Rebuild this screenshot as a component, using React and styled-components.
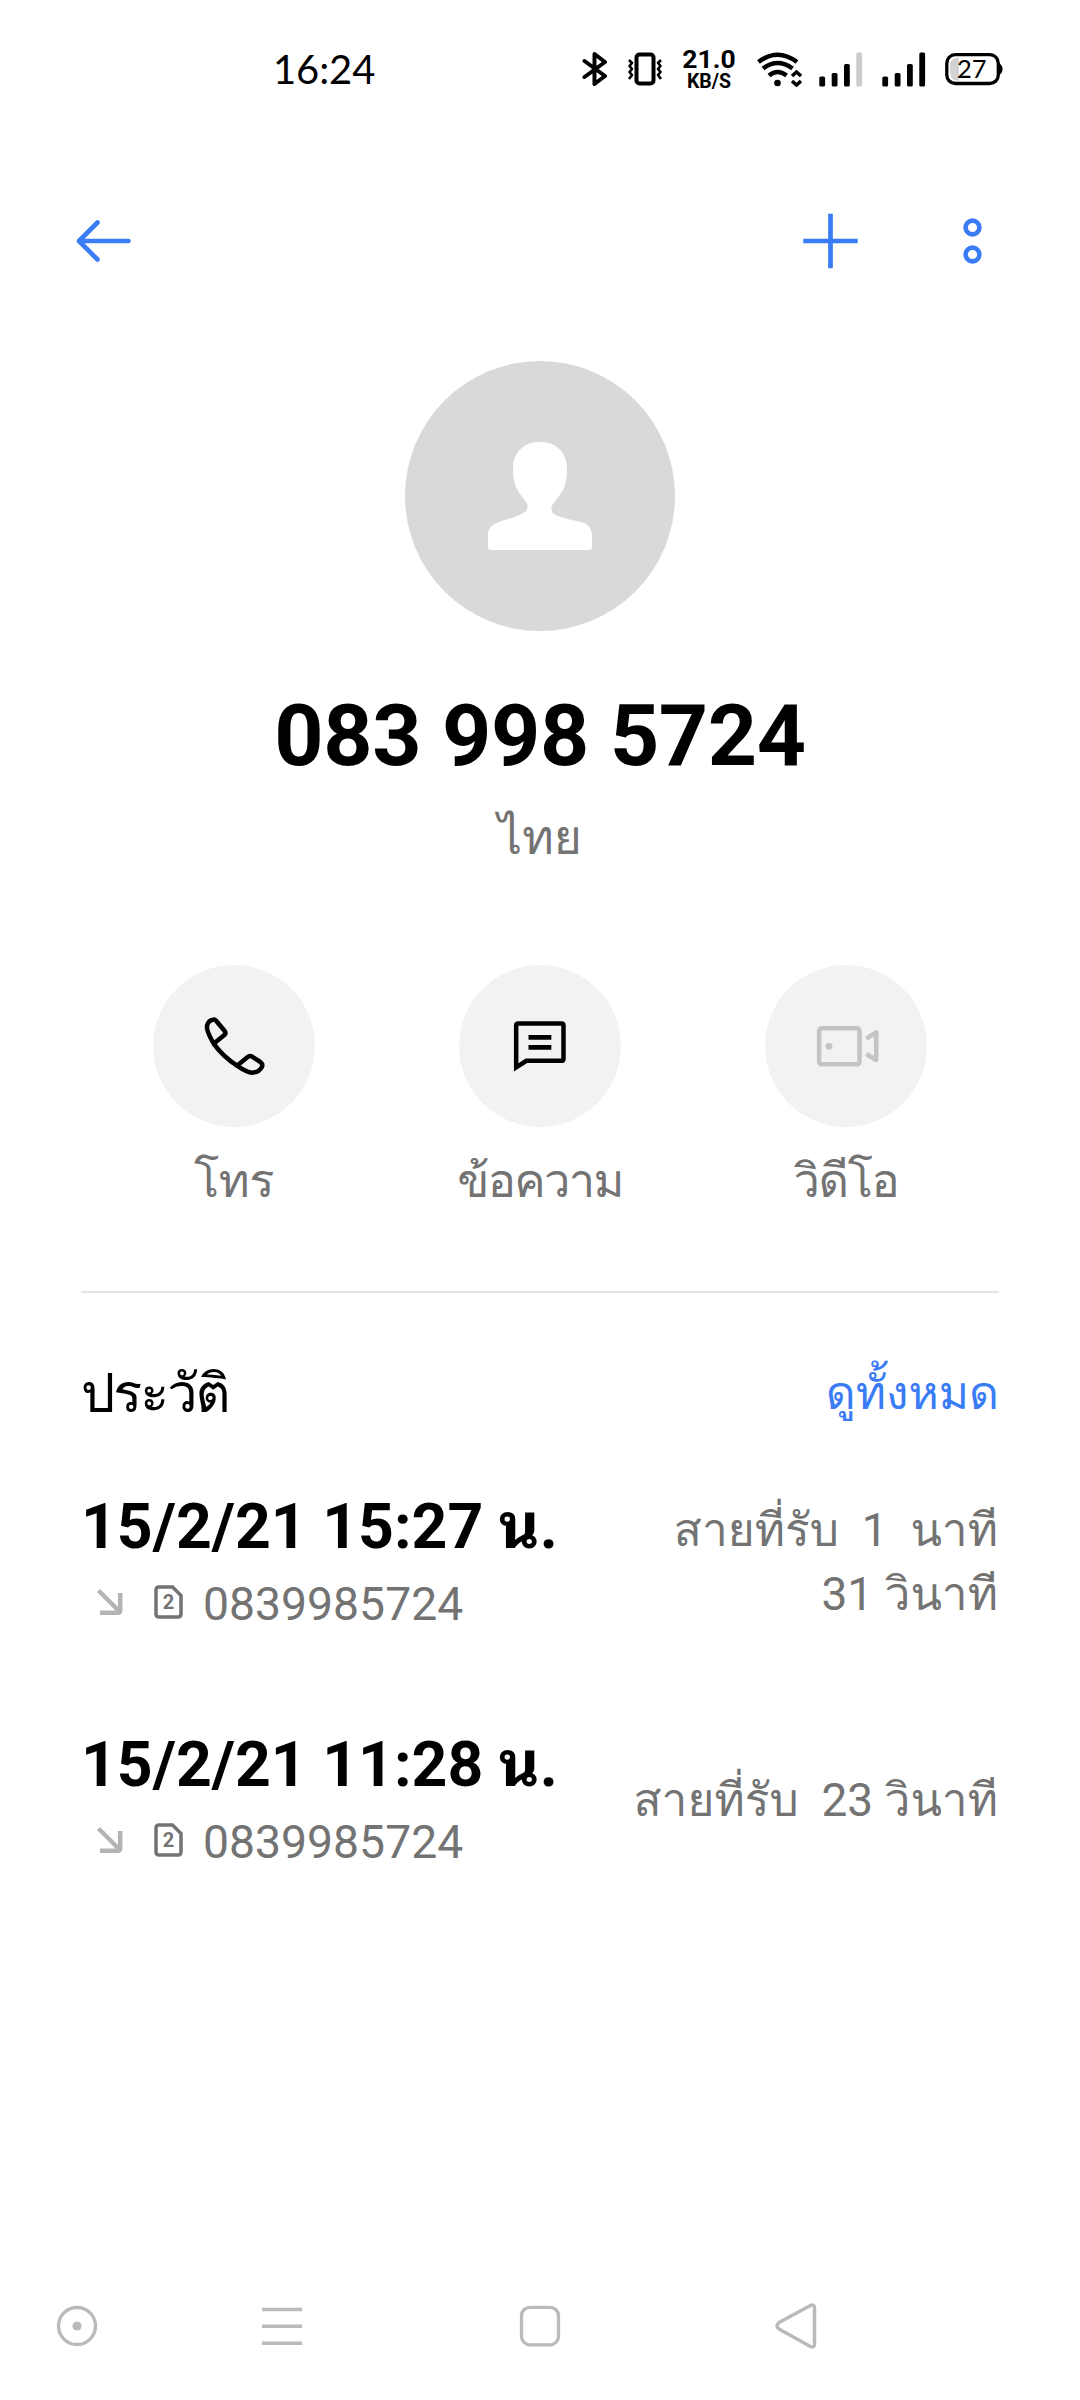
import React from "react";
import styled, { createGlobalStyle } from "styled-components";

const thai = `Roboto, Waree, Loma, Garuda, Umpush, "Noto Sans Thai", "Noto Sans", sans-serif`;
const thaiBold = `Roboto, "Droid Sans Thai", "Noto Sans Thai Looped", Loma, Waree, Garuda, sans-serif`;

const Global = createGlobalStyle`
  html, body { margin: 0; padding: 0; background: #fff; }
  body { font-family: ${thai}; color: #000; }
  * { box-sizing: border-box; }
  svg { display: block; flex: none; }
`;

const Screen = styled.div`
  width: 1080px;
  height: 2400px;
  display: flex;
  flex-direction: column;
  overflow: hidden;
  background: #fff;
`;

const StatusBar = styled.header`
  height: 137px;
  padding-left: 273px;
  display: flex;
  align-items: center;
`;

const Clock = styled.div`
  width: 309px;
  font: 400 40px/50px Lato, sans-serif;
  letter-spacing: -0.1px;
  white-space: nowrap;
`;

const StatusIcon = styled.svg`
  margin-right: ${(p) => p.$gap || 0}px;
`;

const Speed = styled.div`
  width: 52px;
  margin-right: 22px;
  padding-top: 4px;
  display: flex;
  flex-direction: column;
  align-items: center;
  font-weight: 700;
  white-space: nowrap;
`;
const SpeedValue = styled.span`
  font-size: 26.5px;
  line-height: 22px;
`;
const SpeedUnit = styled.span`
  font-size: 19.5px;
  line-height: 23px;
`;

const Toolbar = styled.nav`
  height: 207px;
  padding: 0 98px 0 75px;
  display: flex;
  align-items: center;
`;
const Spacer = styled.div`
  flex: 1;
`;
const ToolButton = styled.button`
  margin: 0 ${(p) => p.$right || 0}px 0 0;
  padding: 0;
  border: 0;
  background: none;
  color: #3a7cf5;
`;

const Profile = styled.section`
  display: flex;
  flex-direction: column;
  align-items: center;
  padding-top: 17px;
`;
const Avatar = styled.svg`
  width: 270px;
  height: 270px;
`;
const PhoneNumber = styled.h1`
  margin: 55px 0 0;
  font-size: 86px;
  line-height: 100px;
  font-weight: 700;
  letter-spacing: -0.4px;
  white-space: nowrap;
`;
const Country = styled.div`
  margin-top: 20px;
  font-size: 48px;
  line-height: 64px;
  height: 64px;
  color: #737373;
`;

const Actions = styled.section`
  display: flex;
  justify-content: center;
  gap: 106px;
  margin-top: 95px;
`;
const Action = styled.div`
  width: 200px;
  display: flex;
  flex-direction: column;
  align-items: center;
`;
const ActionCircle = styled.div`
  width: 162px;
  height: 162px;
  border-radius: 50%;
  background: #f2f2f2;
  color: ${(p) => (p.$disabled ? "#c4c4c4" : "#000")};
`;
const ActionLabel = styled.div`
  margin-top: 22px;
  height: 64px;
  font-size: 47px;
  line-height: 64px;
  letter-spacing: ${(p) => p.$tracking || 0}px;
  color: #737373;
  white-space: nowrap;
`;

const History = styled.section`
  margin: 78px 81px 0;
  border-top: 2px solid #e5e5e5;
`;
const HistoryHead = styled.div`
  display: flex;
  justify-content: space-between;
  align-items: center;
  height: 64px;
  margin-top: 67px;
  line-height: 64px;
  white-space: nowrap;
`;
const Title = styled.h2`
  margin: 4px 0 0;
  font-size: 54px;
  font-weight: 400;
  letter-spacing: -2px;
`;
const SeeAll = styled.a`
  margin-top: 2px;
  font-size: 46px;
  color: #3a7cf5;
`;

const CallRow = styled.article`
  display: flex;
  justify-content: space-between;
  align-items: center;
  height: 143px;
  margin-top: ${(p) => p.$top}px;
`;
const CallInfo = styled.div`
  display: flex;
  flex-direction: column;
`;
const CallTime = styled.div`
  height: 74px;
  font-family: ${thaiBold};
  font-size: 62.5px;
  line-height: 74px;
  font-weight: 700;
  white-space: nowrap;
`;
const CallMeta = styled.div`
  display: flex;
  align-items: center;
  height: 60px;
  margin-top: 8px;
  margin-bottom: 1px;
  padding-left: 15px;
  color: #737373;
`;
const MetaNumber = styled.span`
  margin-left: 20px;
  padding-top: 3px;
  font-size: 46.3px;
  line-height: 62px;
`;
const Sim = styled.svg`
  margin-left: 31px;
`;
const Duration = styled.div`
  padding-right: 1px;
  color: #737373;
  font-size: 46px;
  line-height: 64px;
  text-align: right;
  white-space: pre;
`;
const DurationLine = styled.div`
  height: 64px;
`;

const NavBar = styled.footer`
  margin-top: auto;
  height: 149px;
  padding-left: 56px;
  display: flex;
  align-items: center;
  color: #bababa;
`;
const NavIcon = styled.svg`
  margin-right: ${(p) => p.$gap || 0}px;
`;

const Signal = ({ weak, gap }) => (
  <StatusIcon $gap={gap} width="44" height="36" viewBox="0 0 44 36">
    <rect x="0.3" y="25.5" width="5.8" height="10" rx="1.6" />
    <rect x="12.7" y="22" width="5.8" height="13.5" rx="1.6" />
    <rect x="25" y="13" width="5.8" height="22.5" rx="1.6" />
    <rect x="37.3" y="1.5" width="5.8" height="34" rx="1.6" fill={weak ? "#ccc" : "#000"} />
  </StatusIcon>
);

const calls = [
  { time: "15/2/21 15:27 น.", number: "0839985724", lines: ["สายที่รับ  1  นาที", "31 วินาที"], top: 66 },
  { time: "15/2/21 11:28 น.", number: "0839985724", lines: ["สายที่รับ  23 วินาที"], top: 95 },
];

const PhoneIcon = () => (
  <svg width="162" height="162" viewBox="0 0 486 486" fill="none" stroke="currentColor" strokeWidth="13.5" strokeLinejoin="round">
    <path d="M182 236 C168 212 160 194 162 182 C165 171 172 165 180 164 Q186 163 190 168 L215 198 Q220 205 214 210 Z" />
    <path d="M182 236 Q209 274 252 302" />
    <path d="M252 302 L283 277 Q289 271 296 274 L322 291 Q330 297 327 305 C322 315 312 322 298 323 C284 323 272 316 252 302 Z" />
  </svg>
);

const MessageIcon = () => (
  <svg width="162" height="162" viewBox="0 0 486 486" fill="none" stroke="currentColor" strokeWidth="13.5">
    <path d="M171.5 305 V182 Q171.5 175.500 178 175.500 H307 Q313.500 175.500 313.500 182 V281 Q313.500 287.500 307 287.500 H202 L171.500 307 Z" />
    <path d="M208.500 217 H277 M208.500 247 H277" strokeWidth="14" />
  </svg>
);

const VideoIcon = () => (
  <svg width="162" height="162" viewBox="0 0 486 486" fill="none" stroke="currentColor" strokeWidth="13.5">
    <rect x="162.500" y="190" width="121" height="108" rx="7" />
    <path d="M304 221 L333.500 202 V285 L304 267" strokeLinejoin="round" />
    <circle cx="192" cy="244" r="10" fill="currentColor" stroke="none" />
  </svg>
);

export default function App() {
  return (
    <Screen>
      <Global />
      <StatusBar>
        <Clock>16:24</Clock>
        <StatusIcon $gap={19} width="26" height="36" viewBox="0 0 26 36" fill="none" stroke="#000" strokeWidth="4" strokeLinejoin="round" strokeLinecap="round">
          <path d="M2.500 10 L23 25 L12.500 33 V3 L23 11 L2.500 26" />
        </StatusIcon>
        <StatusIcon $gap={20} width="36" height="36" viewBox="0 0 36 36" fill="none" stroke="#000">
          <rect x="9.500" y="3.500" width="17" height="29" rx="3" strokeWidth="4" />
          <path d="M2 9 L5 12 L2.500 15 L5 18 L2.500 21 L5 24 L2 28 M34 9 L31 12 L33.500 15 L31 18 L33.500 21 L31 24 L34 28" strokeWidth="2.600" strokeLinejoin="round" />
        </StatusIcon>
        <Speed>
          <SpeedValue>21.0</SpeedValue>
          <SpeedUnit>KB/S</SpeedUnit>
        </Speed>
        <StatusIcon $gap={17} width="45" height="36" viewBox="0 0 45 36" fill="none" stroke="#000" strokeWidth="4.500">
          <path d="M1.500 11 Q20.500 -3.500 40 11" />
          <path d="M6 17.500 Q20.500 6.500 35.500 17.500" />
          <path d="M12 24.500 Q20.500 17.500 29.500 24.500" />
          <circle cx="20.500" cy="32" r="3.300" fill="#000" stroke="none" />
          <path d="M35 25 L39.500 21 L44 25 M35 30 L39.500 34 L44 30" strokeWidth="3.500" />
        </StatusIcon>
        <Signal weak gap={19} />
        <Signal gap={19} />
        <svg width="58" height="36" viewBox="0 0 58 36">
          <path d="M14 6.500 C7 6.500 5 10 5 18 C5 27 7 29.500 14 29.500 Z" fill="#d2d2d2" />
          <rect x="1.800" y="3.700" width="51.500" height="28.800" rx="8.500" fill="none" stroke="#000" strokeWidth="3.300" />
          <path d="M54 12.500 Q57.500 13.500 57.500 18 Q57.500 22.500 54 24 Z" />
          <text x="26.800" y="27" textAnchor="middle" fontFamily="Lato" fontSize="25.500">27</text>
        </svg>
      </StatusBar>

      <Toolbar>
        <ToolButton aria-label="back">
          <svg width="56" height="46" viewBox="0 0 56 46" fill="none" stroke="currentColor" strokeWidth="4.600" strokeLinecap="round" strokeLinejoin="round">
            <path d="M22.500 4.500 L4 23 L22.500 41.500 M4 23 H53.500" />
          </svg>
        </ToolButton>
        <Spacer />
        <ToolButton aria-label="add" $right={104}>
          <svg width="56" height="56" viewBox="0 0 56 56" stroke="currentColor" strokeWidth="4.700">
            <path d="M28.500 0.800 V55.200 M1.300 28 H55.700" />
          </svg>
        </ToolButton>
        <ToolButton aria-label="more">
          <svg width="20" height="46" viewBox="0 0 20 46" fill="none" stroke="currentColor" strokeWidth="4.600">
            <circle cx="10.500" cy="9.500" r="6.900" />
            <circle cx="10.500" cy="36.500" r="6.900" />
          </svg>
        </ToolButton>
      </Toolbar>

      <Profile>
        <Avatar viewBox="45 33 810 810">
          <circle cx="450" cy="438" r="405" fill="#d9d9d9" />
          <path
            fill="#fff"
            d="M450 275 C500 275 531 310 531 355 C531 398 524 418 503 443 C489 460 484 468 484 477 C485 491 496 496 513 501 C540 509 555 512 573 516 C593 521 606 535 606 556 V590 Q606 600 596 600 H304 Q294 600 294 590 V555 C294 535 307 523 326 516 L376 500 C400 491 413 484 413 470 C413 461 408 455 396 440 C376 414 369 396 369 355 C369 310 400 275 450 275 Z"
          />
        </Avatar>
        <PhoneNumber>083 998 5724</PhoneNumber>
        <Country>ไทย</Country>
      </Profile>

      <Actions>
        <Action>
          <ActionCircle><PhoneIcon /></ActionCircle>
          <ActionLabel $tracking={-0.5}>โทร</ActionLabel>
        </Action>
        <Action>
          <ActionCircle><MessageIcon /></ActionCircle>
          <ActionLabel $tracking={-1.7}>ข้อความ</ActionLabel>
        </Action>
        <Action>
          <ActionCircle $disabled><VideoIcon /></ActionCircle>
          <ActionLabel $tracking={-1.4}>วิดีโอ</ActionLabel>
        </Action>
      </Actions>

      <History>
        <HistoryHead>
          <Title>ประวัติ</Title>
          <SeeAll>ดูทั้งหมด</SeeAll>
        </HistoryHead>
        {calls.map((c) => (
          <CallRow key={c.time} $top={c.top}>
            <CallInfo>
              <CallTime>{c.time}</CallTime>
              <CallMeta>
                <svg width="27" height="28" viewBox="0 0 27 28" fill="none" stroke="#b4b4b4" strokeWidth="4.500">
                  <path d="M2.500 2.500 L23 23 M24.200 5 V22 Q24.200 24.700 22 24.700 H4" />
                </svg>
                <Sim width="29" height="34" viewBox="0 0 29 34">
                  <path d="M4 2 H18.500 L27 10.500 V29 Q27 32 24 32 H5 Q2 32 2 29 V5 Q2 2 5 2" fill="none" stroke="#737373" strokeWidth="3.500" />
                  <text x="14.500" y="24" textAnchor="middle" fontFamily="Roboto" fontWeight="700" fontSize="20" fill="#737373">2</text>
                </Sim>
                <MetaNumber>{c.number}</MetaNumber>
              </CallMeta>
            </CallInfo>
            <Duration>
              {c.lines.map((l) => (
                <DurationLine key={l}>{l}</DurationLine>
              ))}
            </Duration>
          </CallRow>
        ))}
      </History>

      <NavBar>
        <NavIcon $gap={164} width="42" height="46" viewBox="0 0 42 46" fill="none" stroke="currentColor" strokeWidth="3.300">
          <circle cx="21" cy="23" r="18.500" />
          <circle cx="21" cy="23" r="4.600" fill="currentColor" stroke="none" />
        </NavIcon>
        <NavIcon $gap={217} width="40" height="46" viewBox="0 0 40 46" stroke="currentColor" strokeWidth="3.500">
          <path d="M0 6.500 H40 M0 23.300 H40 M0 40.200 H40" />
        </NavIcon>
        <NavIcon $gap={213} width="42" height="46" viewBox="0 0 42 46" fill="none" stroke="currentColor" strokeWidth="3.300">
          <rect x="2.500" y="4.300" width="37" height="37.500" rx="8.500" />
        </NavIcon>
        <NavIcon width="44" height="46" viewBox="0 0 44 46" fill="none" stroke="currentColor" strokeWidth="3.500" strokeLinejoin="round">
          <path d="M5 19.500 L36 2.800 Q40.500 0.500 40.500 5 V41 Q40.500 45.500 36 43.200 L5 26 Q1 23 5 19.500 Z" />
        </NavIcon>
      </NavBar>
    </Screen>
  );
}
